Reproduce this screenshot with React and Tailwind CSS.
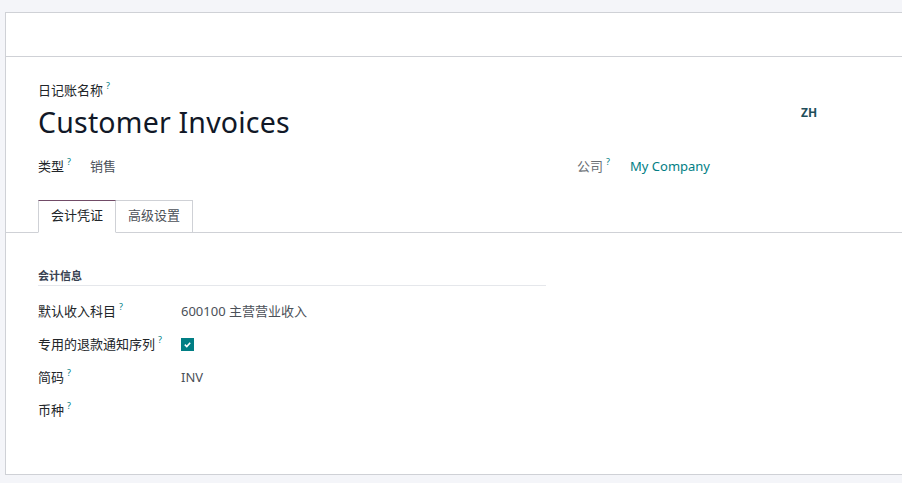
const Help = () => <span className="ml-[3px] text-[9px] text-[#017e84] relative top-[-6px]">?</span>

const Field = ({ label, children }) => (
    <div className="flex items-start h-[33px]">
        <div className="w-[143px] text-[13px] text-[#212529]">
            {label}
            <Help />
        </div>
        <div className="text-[13px] text-[#4b5058]">{children}</div>
    </div>
)

export default function App() {
    return (
        <div
            className="w-[902px] h-[483px] bg-[#f4f5f9] pt-[12px] pl-[5px] overflow-hidden"
            style={{ fontFamily: '"Noto Sans", "Noto Sans CJK SC", sans-serif' }}
        >
            <div className="h-[463px] bg-white border-l border-t border-b border-[#cfd1d6]">
                {/* status bar */}
                <div className="h-[44px] border-b border-[#cfd1d6]"></div>

                {/* title block */}
                <div className="pl-[32px] pr-[80px] pt-[24px] relative">
                    <div className="text-[13px] text-[#212529] leading-[18px]">
                        日记账名称
                        <Help />
                    </div>
                    <div className="mt-[2px] text-[28.5px] leading-[38px] text-[#111827] tracking-[0.2px]">Customer Invoices</div>
                    <div className="absolute left-[795px] top-[47px] text-[12px] font-bold text-[#1f4e5a]">ZH</div>

                    <div className="flex mt-[16px] text-[13px]">
                        <div className="flex w-[539px]">
                            <div className="w-[52px] text-[#212529]">
                                类型
                                <Help />
                            </div>
                            <div className="text-[#4b5058]">销售</div>
                        </div>
                        <div className="flex">
                            <div className="w-[53px] text-[#6b6f75]">
                                公司
                                <Help />
                            </div>
                            <div className="text-[#017e84]">My Company</div>
                        </div>
                    </div>
                </div>

                {/* tabs */}
                <div className="mt-[23px] border-b border-[#cfd1d6] flex pl-[32px] h-[33px]">
                    <div className="w-[78px] h-[33px] border border-[#cfd1d6] border-t-[#714b67] border-b-white bg-white flex items-center justify-center text-[13px] text-[#212529]">
                        会计凭证
                    </div>
                    <div className="w-[77px] h-[32px] border border-l-0 border-b-0 border-[#cfd1d6] flex items-center justify-center text-[13px] text-[#4b5058]">
                        高级设置
                    </div>
                </div>

                {/* tab content */}
                <div className="pl-[32px] pt-[35px]">
                    <div className="w-[508px] border-b border-[#e5e7eb] text-[11px] font-bold text-[#374151] pb-[1px] leading-[16px]">
                        会计信息
                    </div>
                    <div className="mt-[16px]">
                        <Field label="默认收入科目">600100 主营营业收入</Field>
                        <Field label="专用的退款通知序列">
                            <div className="w-[13px] h-[13px] mt-[3px] bg-[#017e84] flex items-center justify-center">
                                <svg width="9" height="9" viewBox="0 0 10 10">
                                    <path d="M2 5.2 L4.2 7.2 L8 3" stroke="white" strokeWidth="1.8" fill="none" />
                                </svg>
                            </div>
                        </Field>
                        <Field label="简码">INV</Field>
                        <Field label="币种"></Field>
                    </div>
                </div>
            </div>
        </div>
    )
}
